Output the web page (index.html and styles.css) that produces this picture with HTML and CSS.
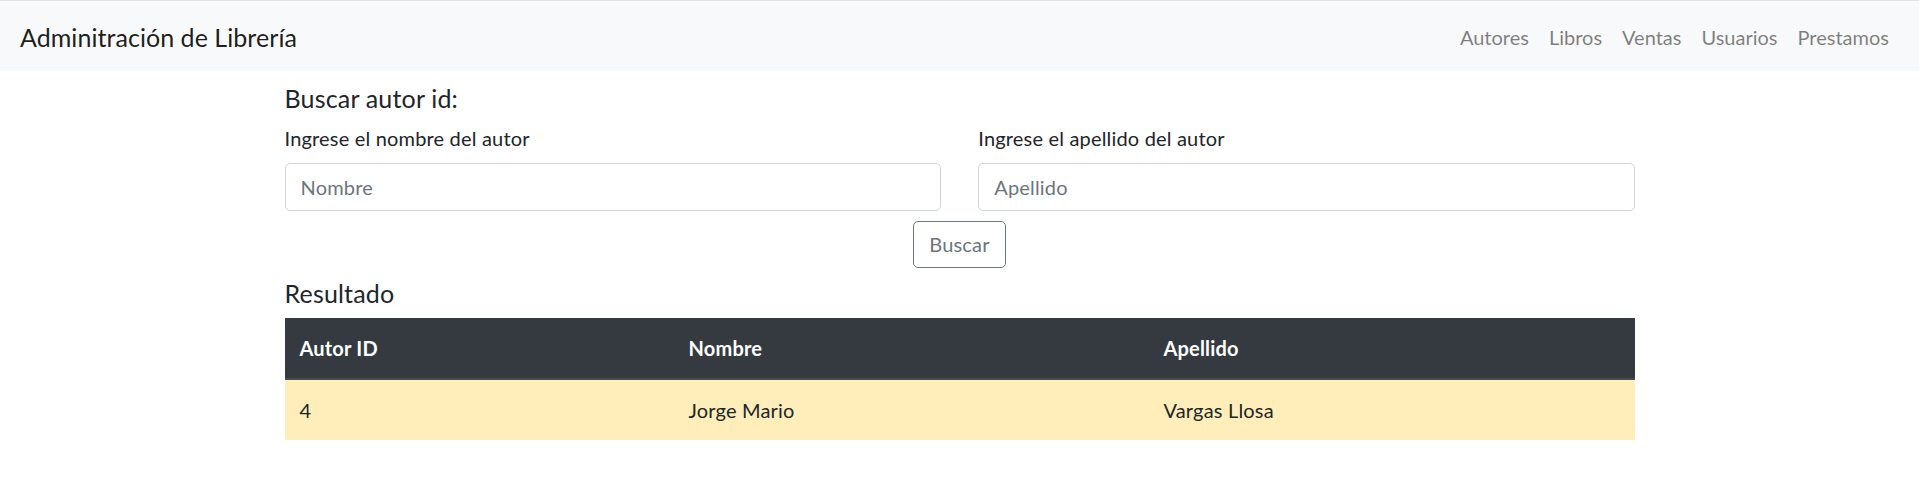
FILE: index.html
```html
<!DOCTYPE html>
<html lang="es">
<head>
<meta charset="utf-8">
<title>Adminitración de Librería</title>
<link rel="stylesheet" href="styles.css">
</head>
<body>
<nav class="navbar">
  <a class="brand" href="#">Adminitración de Librería</a>
  <ul class="nav-links">
    <li><a class="nav-link" href="#">Autores</a></li>
    <li><a class="nav-link" href="#">Libros</a></li>
    <li><a class="nav-link" href="#">Ventas</a></li>
    <li><a class="nav-link" href="#">Usuarios</a></li>
    <li><a class="nav-link" href="#">Prestamos</a></li>
  </ul>
</nav>
<main class="container">
  <h5 class="section-title">Buscar autor id:</h5>
  <form class="search-form">
    <div class="form-row">
      <div class="field">
        <label class="field-label" for="nombre">Ingrese el nombre del autor</label>
        <input class="form-control" id="nombre" type="text" placeholder="Nombre">
      </div>
      <div class="field">
        <label class="field-label" for="apellido">Ingrese el apellido del autor</label>
        <input class="form-control" id="apellido" type="text" placeholder="Apellido">
      </div>
    </div>
    <div class="actions">
      <button class="btn-outline" type="button">Buscar</button>
    </div>
  </form>
  <h5 class="section-title result-title">Resultado</h5>
  <table class="result-table">
    <thead>
      <tr>
        <th class="col-id">Autor ID</th>
        <th class="col-name">Nombre</th>
        <th class="col-last">Apellido</th>
      </tr>
    </thead>
    <tbody>
      <tr class="row-warning">
        <td>4</td>
        <td>Jorge Mario</td>
        <td>Vargas Llosa</td>
      </tr>
    </tbody>
  </table>
</main>
</body>
</html>
```
FILE: styles.css
```css
* { box-sizing: border-box; }

html, body {
  margin: 0;
  padding: 0;
  background: #fff;
}

body {
  font-family: "Segoe UI", Lato, "Noto Sans", sans-serif;
  font-size: 20px;
  line-height: 30px;
  letter-spacing: 0.18px;
  color: #212529;
}

.navbar {
  display: flex;
  align-items: center;
  justify-content: space-between;
  height: 71px;
  padding: 0 20px;
  background: #f8f9fa;
  border-top: 1px solid #e0e2e5;
}

.brand {
  font-size: 25px;
  line-height: 37px;
  letter-spacing: 0.05px;
  color: rgba(0, 0, 0, 0.9);
  text-decoration: none;
  padding-top: 2px;
}

.nav-links {
  display: flex;
  list-style: none;
  margin: 0;
  padding: 0;
}

.nav-link {
  display: block;
  padding: 2px 10px 0;
  color: rgba(0, 0, 0, 0.5);
  text-decoration: none;
  font-size: 20px;
  line-height: 30px;
  letter-spacing: 0;
}

.container {
  width: 1350px;
  margin: 0 auto;
  padding-top: 12px;
}

.section-title {
  margin: 0 0 10px;
  font-size: 25px;
  line-height: 30px;
  font-weight: 400;
}

.result-title {
  margin-top: 10px;
}

.search-form {
  display: flex;
  flex-direction: column;
}

.form-row {
  display: grid;
  grid-template-columns: 1fr 1fr;
  column-gap: 37.5px;
}

.field {
  display: flex;
  flex-direction: column;
}

.field-label {
  margin-bottom: 10px;
  line-height: 30px;
}

.form-control {
  height: 47.5px;
  padding: 7.5px 15px;
  font-family: inherit;
  font-size: 20px;
  line-height: 30px;
  letter-spacing: inherit;
  color: #495057;
  background: #fff;
  border: 1.25px solid #ced4da;
  border-radius: 5px;
  outline: none;
}

.form-control::placeholder {
  color: #6c757d;
  opacity: 1;
}

.actions {
  display: flex;
  justify-content: center;
  margin-top: 10px;
}

.btn-outline {
  height: 47.5px;
  padding: 7.5px 15px;
  font-family: inherit;
  font-size: 20px;
  line-height: 30px;
  letter-spacing: inherit;
  color: #6c757d;
  background: transparent;
  border: 1.25px solid #6c757d;
  border-radius: 5px;
}

.result-table {
  width: 100%;
  border-collapse: collapse;
  table-layout: fixed;
}

.result-table th,
.result-table td {
  padding: 15px;
  text-align: left;
  line-height: 30px;
  vertical-align: top;
}

.result-table th {
  background: #343a40;
  color: #fff;
  font-weight: 700;
  border-bottom: 2.5px solid #454d55;
}

.col-id { width: 389px; }
.col-name { width: 475px; }

.row-warning td {
  background: #ffeeba;
}
```
